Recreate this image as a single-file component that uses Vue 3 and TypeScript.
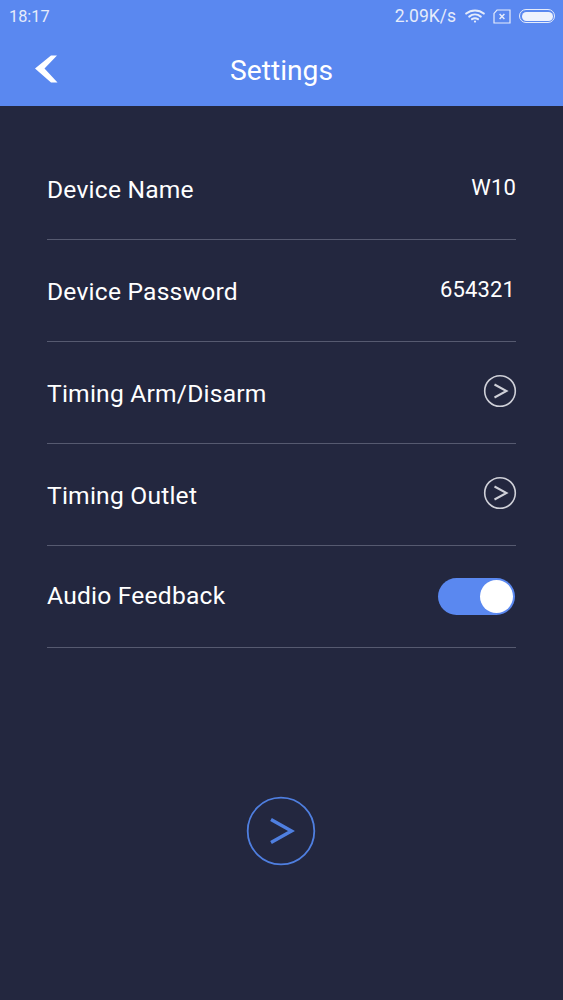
<script setup lang="ts">
interface Row { label: string; value?: string; kind: 'value' | 'arrow' | 'toggle' }
const rows: Row[] = [
  { label: 'Device Name', value: 'W10', kind: 'value' },
  { label: 'Device Password', value: '654321', kind: 'value' },
  { label: 'Timing Arm/Disarm', kind: 'arrow' },
  { label: 'Timing Outlet', kind: 'arrow' },
  { label: 'Audio Feedback', kind: 'toggle' },
]
</script>

<template>
  <div class="page">
    <header class="top">
      <div class="status">
        <span class="time">18:17</span>
        <div class="status-right">
          <span class="speed">2.09K/s</span>
          <svg class="wifi" width="20" height="14" viewBox="0 0 20 14" fill="none" stroke="#e6ecfb" stroke-width="2" stroke-linecap="round">
            <path d="M1.2 4.6C6.2 .4 13.8 .4 18.8 4.6" />
            <path d="M4.2 7.6C7.6 4.9 12.4 4.9 15.8 7.6" />
            <path d="M7 10.2C8.8 9 11.2 9 13 10.2" />
            <circle cx="10" cy="12.6" r="1.1" fill="#e6ecfb" stroke="none" />
          </svg>
          <svg class="sim" width="18" height="15" viewBox="0 0 18 15" fill="none" stroke="#e6ecfb" stroke-width="1.2">
            <path d="M4 1H17V14H1V4.4Z" />
            <path d="M6.6 5 11.4 10M11.4 5 6.6 10" stroke-width="1.5" />
          </svg>
          <div class="battery"><div class="battery-fill"></div></div>
        </div>
      </div>
      <div class="nav">
        <svg class="back" width="26" height="30" viewBox="0 0 26 30">
          <path d="M23 1.5H17L1 14.5 17 28.5H23.5L10.5 14.5Z" fill="#fff" />
        </svg>
        <h1 class="title">Settings</h1>
      </div>
    </header>

    <main class="content">
      <div v-for="row in rows" :key="row.label" class="row">
        <span class="label" :class="{ 'label-toggle': row.kind === 'toggle' }">{{ row.label }}</span>
        <span v-if="row.kind === 'value'" class="value">{{ row.value }}</span>
        <svg v-else-if="row.kind === 'arrow'" class="arrow" width="34" height="34" viewBox="0 0 34 34" fill="none" stroke="#cfd0d8">
          <circle cx="17" cy="17" r="15.3" stroke-width="1.6" />
          <path d="M11.5 10.5 23.5 17 11.5 23.5" stroke-width="2" />
        </svg>
        <div v-else class="toggle"><div class="knob"></div></div>
      </div>
      <button class="next" type="button" aria-label="Next">
        <svg width="70" height="70" viewBox="0 0 70 70" fill="none" stroke="#4f7fe0">
          <circle cx="35" cy="35" r="33.3" stroke-width="1.8" />
          <path d="M25 23.5 45.5 35 25 46.5" stroke-width="3.4" />
        </svg>
      </button>
    </main>
  </div>
</template>

<style>
html, body { margin: 0; background: #23273f; }
</style>

<style scoped>
.page {
  width: 563px;
  height: 1000px;
  overflow: hidden;
  background: #23273f;
  font-family: Roboto, "Liberation Sans", sans-serif;
  color: #fff;
  display: flex;
  flex-direction: column;
}
.top {
  height: 106px;
  background: #5a88f0;
  box-sizing: border-box;
}
.status {
  height: 32px;
  padding: 0 8px 0 9px;
  display: flex;
  align-items: center;
  justify-content: space-between;
  color: #e6ecfb;
  font-size: 16.3px;
}
.status-right { display: flex; align-items: center; }
.speed { font-size: 17.5px; margin-right: 9px; }
.wifi { margin-right: 8px; }
.sim { margin-right: 8px; }
.battery {
  width: 36px;
  height: 14px;
  box-sizing: border-box;
  border: 1px solid #e6ecfb;
  border-radius: 7px;
  padding: 1.5px;
}
.battery-fill { height: 100%; background: #eef2fd; border-radius: 5px; }
.nav {
  height: 74px;
  position: relative;
  display: flex;
  align-items: center;
  justify-content: center;
}
.back { position: absolute; left: 34px; top: 22px; }
.title { margin: 0; font-size: 28.2px; font-weight: 400; position: relative; top: 1px; }
.content {
  flex: 1;
  padding: 32px 47px 0;
  display: flex;
  flex-direction: column;
}
.row {
  height: 102px;
  box-sizing: border-box;
  border-bottom: 1px solid #565a70;
  display: flex;
  align-items: center;
  justify-content: space-between;
  padding-bottom: 1px;
}
.label { font-size: 24.6px; letter-spacing: .22px; position: relative; top: 1px; }
.label-toggle { top: -1px; }
.value { font-size: 22px; letter-spacing: .15px; position: relative; top: -1px; }
.row:nth-child(2) .value { margin-right: 1px; }
.arrow { display: block; margin: 0 -1px 2px 0; }
.toggle {
  width: 77px;
  height: 37px;
  background: #5a88f0;
  border-radius: 19px;
  position: relative;
  margin: 0 1px 0 0;
}
.knob {
  position: absolute;
  right: 2px;
  top: 2px;
  width: 33px;
  height: 33px;
  border-radius: 50%;
  background: #fff;
}
.next {
  align-self: center;
  margin-top: 148px;
  margin-left: -1px;
  margin-right: 1px;
  padding: 0;
  border: 0;
  background: none;
  width: 70px;
  height: 70px;
}
.next svg { display: block; }
</style>
